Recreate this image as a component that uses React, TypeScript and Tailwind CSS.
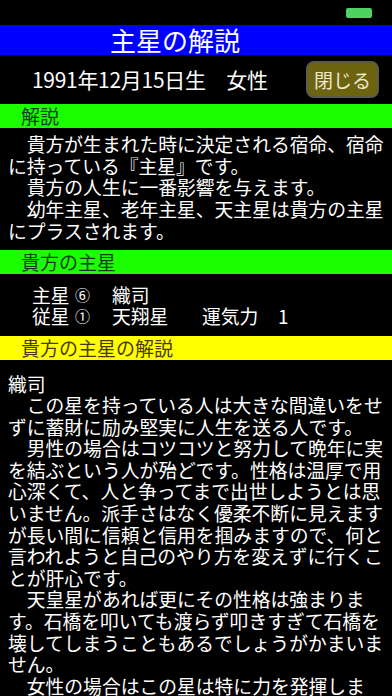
const FONT = "font-['Noto_Sans_CJK_JP',sans-serif]";

const INTRO = [
  "　貴方が生まれた時に決定される宿命、宿命に持っている『主星』です。",
  "　貴方の人生に一番影響を与えます。",
  "　幼年主星、老年主星、天主星は貴方の主星にプラスされます。",
];

const DETAIL = [
  "織司",
  "　この星を持っている人は大きな間違いをせずに蓄財に励み堅実に人生を送る人です。",
  "　男性の場合はコツコツと努力して晩年に実を結ぶという人が殆どです。性格は温厚で用心深くて、人と争ってまで出世しようとは思いません。派手さはなく優柔不断に見えますが長い間に信頼と信用を掴みますので、何と言われようと自己のやり方を変えずに行くことが肝心です。",
  "　天皇星があれば更にその性格は強まります。石橋を叩いても渡らず叩きすぎて石橋を壊してしまうこともあるでしょうがかまいません。",
  "　女性の場合はこの星は特に力を発揮します。家庭を守り、堅実に財を築いていくので良妻賢母となるでしょう。",
];

function SectionBar({ label, tone }: { label: string; tone: "green" | "yellow" }) {
  return (
    <div
      className={`h-[24px] pl-[21px] text-[19px] leading-[24px] ${
        tone === "green" ? "bg-[#1cff00] text-[#0b3d1c]" : "bg-[#ffff00] text-[#4a3a06]"
      }`}
    >
      {label}
    </div>
  );
}

export default function App() {
  return (
    <div className={`w-[392px] min-h-[696px] bg-black text-white ${FONT}`}>
      {/* status bar */}
      <div className="h-[25px] flex items-start justify-end pr-[20px] pt-[8px]">
        <div className="w-[26px] h-[10px] rounded-[2px] bg-[#4fd360]" />
      </div>

      {/* title */}
      <div className="h-[30px] bg-[#0000ff] pl-[110px] text-[26px] leading-[30px]">主星の解説</div>

      {/* birthday + close */}
      <div className="h-[49px] flex items-center">
        <span className="pl-[32px] text-[21px] tracking-[-0.3px]">1991年12月15日生　女性</span>
        <button className="ml-auto mr-[13px] w-[73px] h-[37px] rounded-[8px] border-2 border-[#5c5a4a] bg-[#6d6412] text-[19px] text-[#ece8cc] leading-none">
          閉じる
        </button>
      </div>

      <SectionBar label="解説" tone="green" />
      <div className="px-[8px] pt-[5px] pb-[8px] text-[18.8px] leading-[21.7px]">
        {INTRO.map((p) => (
          <p key={p}>{p}</p>
        ))}
      </div>

      <SectionBar label="貴方の主星" tone="green" />
      <div className="pl-[32px] pt-[10px] pb-[9px] text-[18.8px] leading-[21.5px] whitespace-nowrap">
        <div className="flex items-center">
          <span className="w-[40px] shrink-0">主星</span>
          <span className="w-[40px] shrink-0 pl-[3px] text-[15px]">⑥</span>
          <span>織司</span>
        </div>
        <div className="flex items-center">
          <span className="w-[40px] shrink-0">従星</span>
          <span className="w-[40px] shrink-0 pl-[3px] text-[15px]">①</span>
          <span className="w-[90px] shrink-0">天翔星</span>
          <span className="w-[76px] shrink-0">運気力</span>
          <span>1</span>
        </div>
      </div>

      <SectionBar label="貴方の主星の解説" tone="yellow" />
      <div className="px-[8px] pt-[13px] text-[18.8px] leading-[21.6px]">
        {DETAIL.map((p) => (
          <p key={p}>{p}</p>
        ))}
      </div>
    </div>
  );
}
